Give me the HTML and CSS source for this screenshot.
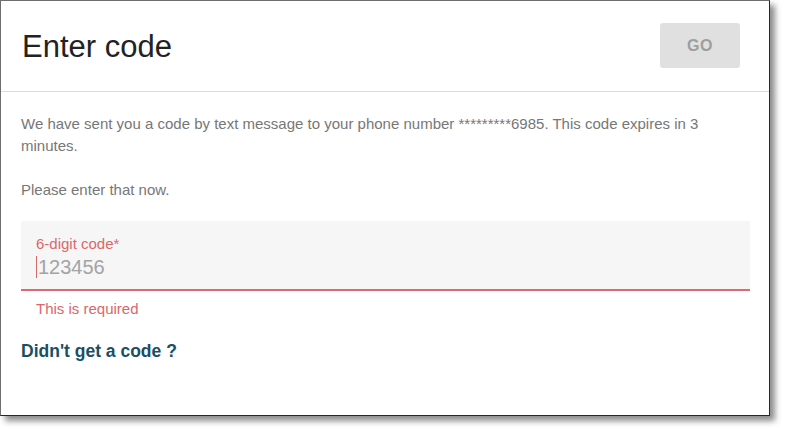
FILE: index.html
```html
<!DOCTYPE html>
<html lang="en">
<head>
<meta charset="utf-8">
<title>Enter code</title>
<link rel="stylesheet" href="styles.css">
</head>
<body>
<div class="dialog">
  <header class="dialog-header">
    <h1 class="dialog-title">Enter code</h1>
    <button class="go-button" type="button" disabled>GO</button>
  </header>
  <main class="dialog-body">
    <p class="info">We have sent you a code by text message to your phone number *********6985. This code expires in 3 minutes.</p>
    <p class="info">Please enter that now.</p>
    <div class="field">
      <div class="field-label">6-digit code*</div>
      <div class="field-value"><span class="caret"></span><span class="placeholder">123456</span></div>
    </div>
    <div class="field-error">This is required</div>
    <a class="resend" href="#">Didn't get a code ?</a>
  </main>
</div>
</body>
</html>
```

FILE: styles.css
```css
html, body {
  margin: 0;
  padding: 0;
  background: #ffffff;
}

body {
  font-family: "Liberation Sans", Arial, sans-serif;
  width: 785px;
  height: 430px;
  overflow: hidden;
}

.dialog {
  box-sizing: border-box;
  width: 770px;
  height: 416px;
  background: #ffffff;
  border: 1px solid #6e6e6e;
  border-right-color: #1f2a2e;
  border-bottom-color: #1f2a2e;
  box-shadow: 5px 5px 6px rgba(0, 0, 0, 0.45);
  display: flex;
  flex-direction: column;
}

.dialog-header {
  height: 90px;
  display: flex;
  align-items: center;
  justify-content: space-between;
  padding: 0 29px 0 21px;
  border-bottom: 1px solid #dcdcdc;
}

.dialog-title {
  margin: 0;
  font-size: 31px;
  font-weight: normal;
  color: #222222;
  line-height: 32px;
  padding-top: 1px;
}

.go-button {
  width: 80px;
  height: 45px;
  margin-top: -1px;
  border: none;
  border-radius: 3px;
  background: #e0e0e0;
  color: #9e9e9e;
  font-family: "Liberation Sans", Arial, sans-serif;
  font-weight: bold;
  font-size: 16px;
  letter-spacing: 0.5px;
  padding: 0;
}

.dialog-body {
  padding: 21px 19px 0 20px;
  display: flex;
  flex-direction: column;
}

.info {
  margin: 0 0 22px 0;
  font-size: 15px;
  line-height: 22px;
  color: #777777;
}

.field {
  margin-top: -2px;
  height: 70px;
  background: #f6f6f6;
  border-bottom: 2px solid #dc6a6e;
  padding: 14px 15px 0 15px;
  box-sizing: border-box;
}

.field-label {
  font-size: 15px;
  line-height: 18px;
  color: #d9686c;
}

.field-value {
  display: flex;
  align-items: center;
  height: 26px;
  margin-top: 1px;
}

.caret {
  width: 1px;
  height: 22px;
  background: #d9686c;
  margin-right: 1px;
}

.placeholder {
  font-size: 20px;
  color: #a3a3a3;
  line-height: 24px;
}

.field-error {
  padding: 8px 15px 0 15px;
  font-size: 15px;
  line-height: 20px;
  color: #d9686c;
}

.resend {
  margin-top: 21px;
  align-self: flex-start;
  font-size: 17.5px;
  font-weight: bold;
  line-height: 22px;
  color: #1b4f63;
  text-decoration: none;
}
```
